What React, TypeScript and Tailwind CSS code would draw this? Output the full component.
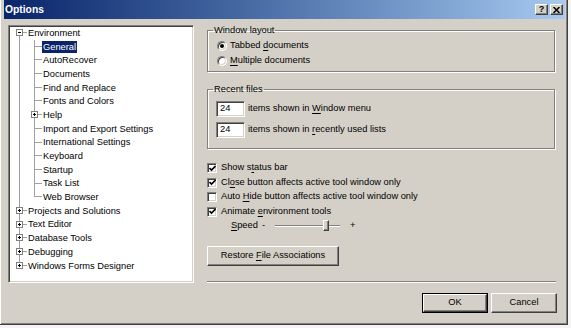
import type { ReactNode } from 'react';

const LINE = 'bg-[#a0a0a0]';

type Row = {
  label: string;
  level: 0 | 1;
  expander?: '+' | '-';
  first?: boolean;
  last?: boolean;
  lastChild?: boolean;
  selected?: boolean;
};

const TREE: Row[] = [
  { label: 'Environment', level: 0, expander: '-', first: true },
  { label: 'General', level: 1, selected: true },
  { label: 'AutoRecover', level: 1 },
  { label: 'Documents', level: 1 },
  { label: 'Find and Replace', level: 1 },
  { label: 'Fonts and Colors', level: 1 },
  { label: 'Help', level: 1, expander: '+' },
  { label: 'Import and Export Settings', level: 1 },
  { label: 'International Settings', level: 1 },
  { label: 'Keyboard', level: 1 },
  { label: 'Startup', level: 1 },
  { label: 'Task List', level: 1 },
  { label: 'Web Browser', level: 1, lastChild: true },
  { label: 'Projects and Solutions', level: 0, expander: '+' },
  { label: 'Text Editor', level: 0, expander: '+' },
  { label: 'Database Tools', level: 0, expander: '+' },
  { label: 'Debugging', level: 0, expander: '+' },
  { label: 'Windows Forms Designer', level: 0, expander: '+', last: true },
];

function U({ children }: { children: ReactNode }) {
  return <span className="underline underline-offset-[1.5px] decoration-1">{children}</span>;
}

function Cell({ up, down, right, box }: { up?: boolean; down?: boolean; right?: boolean; box?: '+' | '-' }) {
  return (
    <span className="relative w-[15px] h-full shrink-0">
      {up && <span className={`absolute left-[7px] top-0 h-1/2 w-px ${LINE}`} />}
      {down && <span className={`absolute left-[7px] top-1/2 bottom-0 w-px ${LINE}`} />}
      {right && <span className={`absolute left-[7px] right-0 top-[6px] h-px ${LINE}`} />}
      {box && (
        <span className="absolute left-[4px] top-[3px] w-[7px] h-[7px] border border-[#808080] bg-white">
          <span className="absolute left-[1px] top-[2px] w-[3px] h-px bg-black" />
          {box === '+' && <span className="absolute left-[2px] top-[1px] w-px h-[3px] bg-black" />}
        </span>
      )}
    </span>
  );
}

function TreeRow({ row }: { row: Row }) {
  return (
    <div className="flex items-center h-[13.7px]">
      {row.level === 0 ? (
        <Cell up={!row.first} down={!row.last} right box={row.expander} />
      ) : (
        <>
          <Cell up down />
          <Cell up down={!row.lastChild} right box={row.expander} />
        </>
      )}
      <span
        className={`px-[1px] h-[12px] leading-[12px] whitespace-nowrap ${
          row.selected ? 'bg-[#0a246a] text-white' : 'text-black'
        }`}
      >
        {row.label}
      </span>
    </div>
  );
}

const sunken =
  'border border-t-[#808080] border-l-[#808080] border-r-white border-b-white shadow-[inset_1px_1px_0_#404040,inset_-1px_-1px_0_#d4d0c8]';
const raised =
  'border border-t-white border-l-white border-r-[#404040] border-b-[#404040] shadow-[inset_-1px_-1px_0_#808080]';
const etched =
  'border border-[#808080] shadow-[inset_1px_1px_0_#fff,1px_1px_0_#fff]';

function Radio({ checked, children }: { checked?: boolean; children: ReactNode }) {
  return (
    <div className="flex items-center h-[15px]">
      <span className={`relative w-[10px] h-[10px] rounded-full bg-white ${sunken} flex items-center justify-center`}>
        {checked && <span className="w-[4px] h-[4px] rounded-full bg-black" />}
      </span>
      <span className="ml-[3px]">{children}</span>
    </div>
  );
}

function Check({ checked, children }: { checked?: boolean; children: ReactNode }) {
  return (
    <div className="flex items-center h-[14.5px]">
      <span className={`w-[10px] h-[10px] bg-white ${sunken} flex items-center justify-center`}>
        {checked && (
          <svg width="7" height="7" viewBox="0 0 7 7">
            <path d="M0.5 3 L2.5 5 L6.5 1" fill="none" stroke="#000" strokeWidth="1.6" />
          </svg>
        )}
      </span>
      <span className="ml-[4px] whitespace-nowrap">{children}</span>
    </div>
  );
}

function Btn({ children, w, def }: { children: ReactNode; w: string; def?: boolean }) {
  return (
    <div className={`${def ? 'border border-black' : ''} ${w} h-[20px] flex`}>
      <div className={`flex-1 bg-[#d4d0c8] ${raised} flex items-center justify-center`}>{children}</div>
    </div>
  );
}

export default function App() {
  return (
    <div className="w-[571px] h-[328px] bg-[#f4f4f4] font-['Liberation_Sans',Arial,sans-serif] text-[9.3px] text-black">
      <div className="w-[568px] h-[325px] bg-[#d4d0c8] border-r border-b border-[#404040] flex flex-col">
        <div className="flex-1 flex flex-col pl-[3px] pr-[2px] border-l border-white shadow-[inset_-1px_-1px_0_#808080]">
          {/* title bar */}
          <div className="h-[19px] flex items-center bg-gradient-to-r from-[#0a246a] to-[#a6caf0] pl-[1px] pr-[2px]">
            <span className="text-white font-bold text-[10.3px]">Options</span>
            <div className="ml-auto flex gap-[2px]">
              <div className={`w-[13px] h-[11px] bg-[#d4d0c8] ${raised} flex items-center justify-center text-[9px] font-bold leading-none`}>
                ?
              </div>
              <div className={`w-[13px] h-[11px] bg-[#d4d0c8] ${raised} flex items-center justify-center`}>
                <svg width="7" height="6" viewBox="0 0 7 6">
                  <path d="M0.5 0 L6.5 6 M6.5 0 L0.5 6" stroke="#000" strokeWidth="1.5" />
                </svg>
              </div>
            </div>
          </div>

          {/* body */}
          <div className="flex pt-[6px] pl-[4px]">
            <div className={`w-[186px] h-[258px] bg-white ${sunken} pl-[3px] pt-0`}>
              {TREE.map(r => (
                <TreeRow key={r.label} row={r} />
              ))}
            </div>

            <div className="ml-[13px] w-[350px] flex flex-col">
              <fieldset className={`mr-[2px] ${etched} pl-[9px] pt-[2.5px] pb-[2.5px]`}>
                <legend className="ml-[-4px] px-[1px] leading-[11px]">Window layout</legend>
                <Radio checked>
                  Tabbed <U>d</U>ocuments
                </Radio>
                <Radio>
                  <U>M</U>ultiple documents
                </Radio>
              </fieldset>

              <fieldset className={`mt-[12px] mr-[2px] ${etched} pl-[8px] pt-[6px] pb-[10px]`}>
                <legend className="ml-[-3px] px-[1px] leading-[11px]">Recent files</legend>
                <div className="flex flex-col gap-[5px]">
                  <div className="flex items-center">
                    <div className={`w-[29px] h-[16px] bg-white ${sunken} pl-[3px] flex items-center`}>24</div>
                    <span className="ml-[3px]">
                      items shown in <U>W</U>indow menu
                    </span>
                  </div>
                  <div className="flex items-center">
                    <div className={`w-[29px] h-[16px] bg-white ${sunken} pl-[3px] flex items-center`}>24</div>
                    <span className="ml-[3px]">
                      items shown in <U>r</U>ecently used lists
                    </span>
                  </div>
                </div>
              </fieldset>

              <div className="mt-[12px] flex flex-col">
                <Check checked>
                  Show s<U>t</U>atus bar
                </Check>
                <Check checked>
                  Cl<U>o</U>se button affects active tool window only
                </Check>
                <Check>
                  Auto <U>H</U>ide button affects active tool window only
                </Check>
                <Check checked>
                  Animate <U>e</U>nvironment tools
                </Check>
                <div className="flex items-center h-[13.5px] pl-[24px]">
                  <span>
                    <U>S</U>peed
                  </span>
                  <span className="ml-[4px]">-</span>
                  <div className="relative ml-[10px] w-[65px] h-[11px] flex items-center">
                    <div className="w-full h-[2px] border-t border-[#808080] border-b border-b-white" />
                    <div className={`absolute left-[48px] top-0 w-[6px] h-[11px] bg-[#d4d0c8] ${raised}`} />
                  </div>
                  <span className="ml-[10px]">+</span>
                </div>
              </div>

              <div className="mt-[13px]">
                <Btn w="w-[132px]">
                  <span>
                    Restore <U>F</U>ile Associations
                  </span>
                </Btn>
              </div>

              <div className="mt-[15px] mr-[1px] h-[2px] border-t border-[#808080] border-b border-b-white" />

              <div className="mt-[10px] flex justify-end gap-[3px]">
                <Btn w="w-[66px]" def>
                  OK
                </Btn>
                <Btn w="w-[66px]">Cancel</Btn>
              </div>
            </div>
          </div>
        </div>
      </div>
    </div>
  );
}
